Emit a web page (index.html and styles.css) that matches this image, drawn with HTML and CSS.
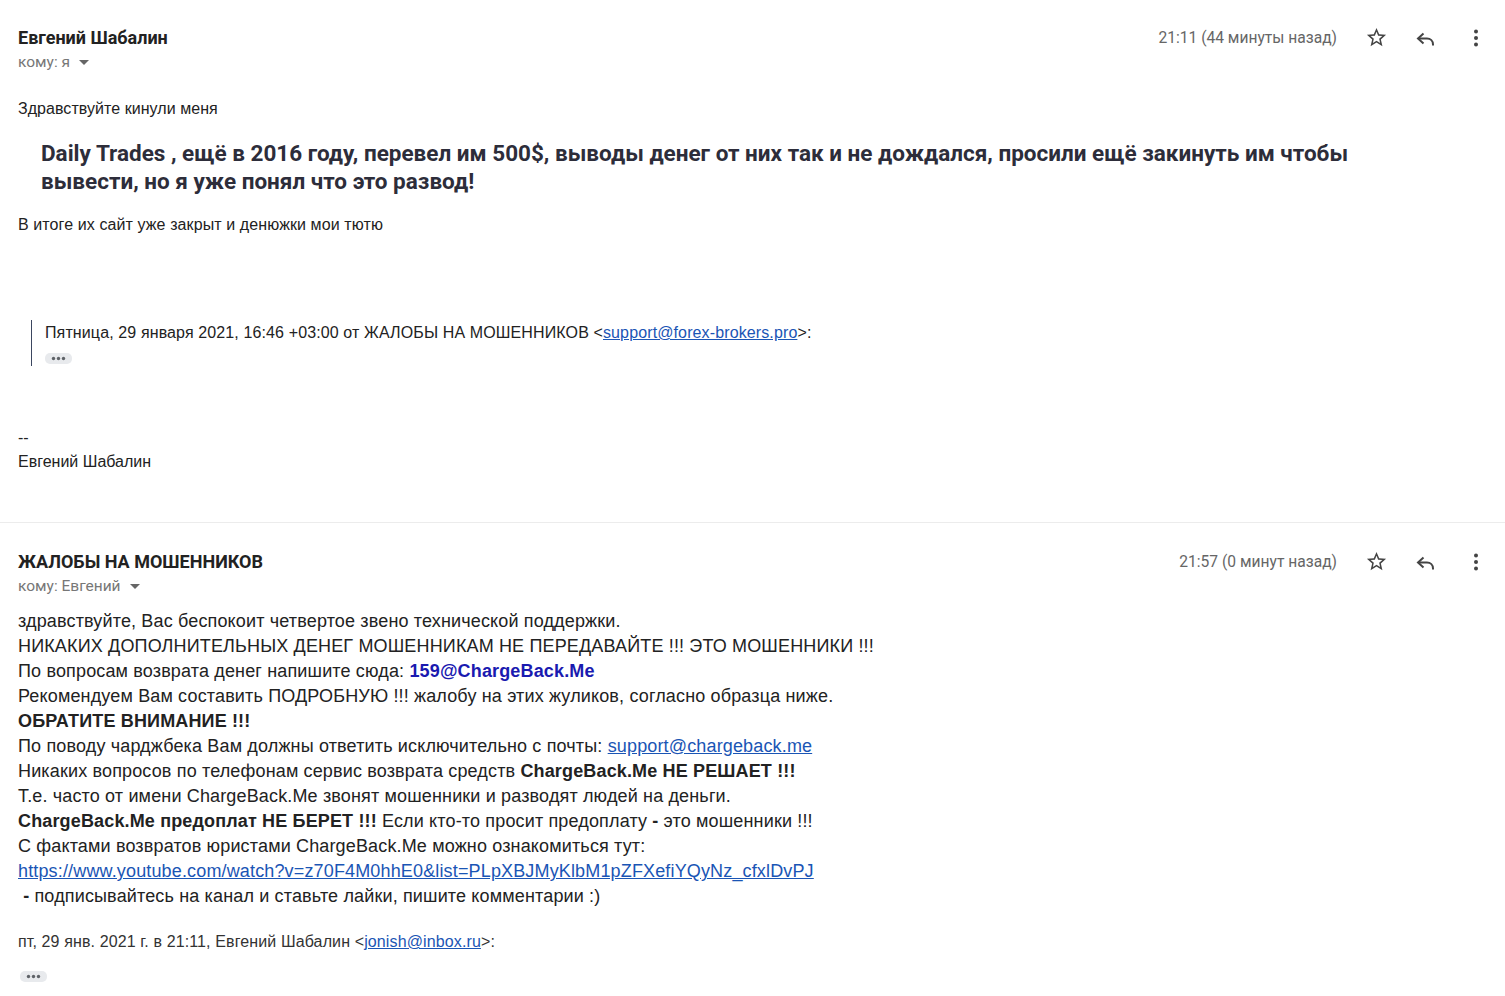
FILE: index.html
```html
<!DOCTYPE html>
<html lang="ru">
<head>
<meta charset="utf-8">
<title>Письмо</title>
<link rel="stylesheet" href="styles.css">
</head>
<body>
<div class="thread">
  <section class="message first">
    <div class="msg-head">
      <div class="who">
        <div class="sender">Евгений Шабалин</div>
        <div class="to">кому: я <span class="caret"></span></div>
      </div>
      <div class="meta">
        <span class="time">21:11 (44 минуты назад)</span>
        <span class="icon-btn"><svg viewBox="0 0 24 24" width="23" height="23"><path d="M22 9.24l-7.19-.62L12 2 9.19 8.63 2 9.24l5.46 4.73L5.82 21 12 17.27 18.18 21l-1.63-7.03L22 9.24zM12 15.4l-3.76 2.27 1-4.28-3.32-2.88 4.38-.38L12 6.1l1.71 4.04 4.38.38-3.32 2.88 1 4.28L12 15.4z" fill="#444"/></svg></span>
        <span class="icon-btn"><svg viewBox="0 0 24 24" width="24" height="24"><path d="M9.5 7.5L4 12.5l5.5 5" fill="none" stroke="#444" stroke-width="2"/><path d="M4.5 12.5h8.5c3.5 0 6 2.5 6 6v1" fill="none" stroke="#444" stroke-width="2"/></svg></span>
        <span class="icon-btn"><svg viewBox="0 0 24 24" width="24" height="24"><circle cx="12" cy="5.5" r="2" fill="#444"/><circle cx="12" cy="12" r="2" fill="#444"/><circle cx="12" cy="18.5" r="2" fill="#444"/></svg></span>
      </div>
    </div>
    <div class="body1">
      <p class="p1">Здравствуйте кинули меня</p>
      <p class="big">Daily Trades , ещё в 2016 году, перевел им 500$, выводы денег от них так и не дождался, просили ещё закинуть им чтобы вывести, но я уже понял что это развод!</p>
      <p class="p2">В итоге их сайт уже закрыт и денюжки мои тютю</p>
      <blockquote class="quote">
        <div class="qline">Пятница, 29 января 2021, 16:46 +03:00 от ЖАЛОБЫ НА МОШЕННИКОВ &lt;<a href="#">support@forex-brokers.pro</a>&gt;:</div>
        <span class="dots"><svg viewBox="0 0 27 11" width="27" height="11"><circle cx="8.5" cy="5.5" r="1.7" fill="#5f6368"/><circle cx="13.5" cy="5.5" r="1.7" fill="#5f6368"/><circle cx="18.5" cy="5.5" r="1.7" fill="#5f6368"/></svg></span>
      </blockquote>
      <div class="sig">
        <div>--</div>
        <div>Евгений Шабалин</div>
      </div>
    </div>
  </section>
  <hr class="divider">
  <section class="message second">
    <div class="msg-head">
      <div class="who">
        <div class="sender">ЖАЛОБЫ НА МОШЕННИКОВ</div>
        <div class="to">кому: Евгений <span class="caret"></span></div>
      </div>
      <div class="meta">
        <span class="time">21:57 (0 минут назад)</span>
        <span class="icon-btn"><svg viewBox="0 0 24 24" width="23" height="23"><path d="M22 9.24l-7.19-.62L12 2 9.19 8.63 2 9.24l5.46 4.73L5.82 21 12 17.27 18.18 21l-1.63-7.03L22 9.24zM12 15.4l-3.76 2.27 1-4.28-3.32-2.88 4.38-.38L12 6.1l1.71 4.04 4.38.38-3.32 2.88 1 4.28L12 15.4z" fill="#444"/></svg></span>
        <span class="icon-btn"><svg viewBox="0 0 24 24" width="24" height="24"><path d="M9.5 7.5L4 12.5l5.5 5" fill="none" stroke="#444" stroke-width="2"/><path d="M4.5 12.5h8.5c3.5 0 6 2.5 6 6v1" fill="none" stroke="#444" stroke-width="2"/></svg></span>
        <span class="icon-btn"><svg viewBox="0 0 24 24" width="24" height="24"><circle cx="12" cy="5.5" r="2" fill="#444"/><circle cx="12" cy="12" r="2" fill="#444"/><circle cx="12" cy="18.5" r="2" fill="#444"/></svg></span>
      </div>
    </div>
    <div class="body2">
      <div>здравствуйте, Вас беспокоит четвертое звено технической поддержки.</div>
      <div>НИКАКИХ ДОПОЛНИТЕЛЬНЫХ ДЕНЕГ МОШЕННИКАМ НЕ ПЕРЕДАВАЙТЕ !!! ЭТО МОШЕННИКИ !!!</div>
      <div>По вопросам возврата денег напишите сюда: <b class="blue">159@ChargeBack.Me</b></div>
      <div>Рекомендуем Вам составить ПОДРОБНУЮ !!! жалобу на этих жуликов, согласно образца ниже.</div>
      <div><b>ОБРАТИТЕ ВНИМАНИЕ !!!</b></div>
      <div>По поводу чарджбека Вам должны ответить исключительно с почты: <a href="#">support@chargeback.me</a></div>
      <div>Никаких вопросов по телефонам сервис возврата средств <b>ChargeBack.Me НЕ РЕШАЕТ</b> <b>!!!</b></div>
      <div>Т.е. часто от имени ChargeBack.Me звонят мошенники и разводят людей на деньги.</div>
      <div><b>ChargeBack.Me предоплат НЕ БЕРЕТ</b> <b>!!!</b> Если кто-то просит предоплату <b>-</b> это мошенники !!!</div>
      <div>С фактами возвратов юристами ChargeBack.Me можно ознакомиться тут:</div>
      <div><a href="#">https://www.youtube.com/watch?v=z70F4M0hhE0&amp;list=PLpXBJMyKlbM1pZFXefiYQyNz_cfxlDvPJ</a></div>
      <div>&nbsp;<b>-</b> подписывайтесь на канал и ставьте лайки, пишите комментарии :)</div>
    </div>
    <div class="reply-quote">пт, 29 янв. 2021 г. в 21:11, Евгений Шабалин &lt;<a href="#">jonish@inbox.ru</a>&gt;:</div>
    <span class="dots dots2"><svg viewBox="0 0 27 11" width="27" height="11"><circle cx="8.5" cy="5.5" r="1.7" fill="#5f6368"/><circle cx="13.5" cy="5.5" r="1.7" fill="#5f6368"/><circle cx="18.5" cy="5.5" r="1.7" fill="#5f6368"/></svg></span>
  </section>
</div>
</body>
</html>
```
FILE: styles.css
```css
* { box-sizing: border-box; }
html, body { margin: 0; padding: 0; background: #fff; }
body { font-family: "Liberation Sans", Arial, sans-serif; color: #222; }
p { margin: 0; }
a { color: #1a55b5; text-decoration: underline; }

.message { padding: 25px 5px 0 18px; }
.msg-head { display: flex; justify-content: space-between; align-items: flex-start; }
.who { display: flex; flex-direction: column; }
.sender { font-family: Roboto, "Liberation Sans", sans-serif; font-weight: 700; font-size: 18px; line-height: 25px; color: #222; }
.to { font-family: Roboto, "Liberation Sans", sans-serif; font-size: 15.5px; line-height: 25px; color: #777; display: flex; align-items: center; gap: 7px; }
.caret { width: 0; height: 0; border-left: 5px solid transparent; border-right: 5px solid transparent; border-top: 5px solid #666; margin-left: 2px; }
.meta { display: flex; align-items: center; height: 25px; }
.time { font-family: Roboto, "Liberation Sans", sans-serif; font-size: 15.6px; color: #666; margin-right: 14px; }
.icon-btn { width: 50px; height: 25px; display: flex; align-items: center; justify-content: center; }
.icon-btn:last-child { width: 49px; }

.body1 { font-size: 16px; }
.p1 { margin-top: 24px; line-height: 20px; letter-spacing: 0.05px; }
.big { margin-top: 20px; padding-left: 23px; font-family: Roboto, "Liberation Sans", sans-serif; font-weight: 700; font-size: 22.5px; line-height: 28px; color: #2d2d3a; max-width: 1385px; }
.p2 { margin-top: 20px; line-height: 20px; letter-spacing: 0.1px; }

.quote { margin: 85px 0 0 13px; border-left: 1px solid #3b4660; padding: 3px 0 2px 13px; }
.qline { line-height: 20px; letter-spacing: 0.12px; color: #222; }
.dots { display: flex; width: 27px; height: 11px; border-radius: 5px; background: #e8eaed; margin-top: 10px; }
.dots svg { display: block; }

.sig { margin-top: 60px; line-height: 24px; }

.divider { margin: 48px 0 0 0; border: 0; border-top: 1px solid #ececec; height: 0; }

.second { padding-top: 26px; }
.body2 { margin-top: 10px; font-size: 18px; line-height: 25px; color: #222; letter-spacing: 0.15px; }
.blue { color: #1a1ab0; }
.reply-quote { margin-top: 23px; font-size: 16px; line-height: 20px; color: #333; letter-spacing: 0.12px; }
.dots2 { margin-left: 2px; margin-top: 19px; }
```
